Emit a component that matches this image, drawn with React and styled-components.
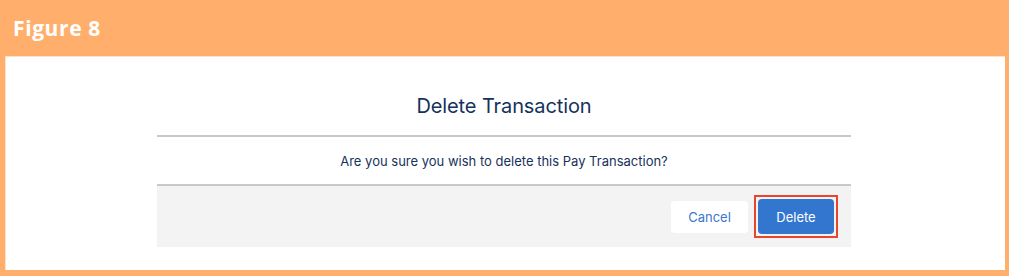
import React from 'react';
import styled, { createGlobalStyle } from 'styled-components';

const GlobalStyle = createGlobalStyle`
  html, body {
    margin: 0;
    padding: 0;
    background: #ffffff;
  }
  * {
    box-sizing: border-box;
  }
`;

function App() {
  return (
    <>
      <GlobalStyle />
      <Frame>
        <FigureHeader>Figure 8</FigureHeader>
        <Canvas>
          <Modal>
            <ModalHeader>
              <Title>Delete Transaction</Title>
            </ModalHeader>
            <ModalBody>
              Are you sure you wish to delete this Pay Transaction?
            </ModalBody>
            <ModalFooter>
              <Button>Cancel</Button>
              <Highlight>
                <Button $primary>Delete</Button>
              </Highlight>
            </ModalFooter>
          </Modal>
        </Canvas>
      </Frame>
    </>
  );
}

const Frame = styled.div`
  display: flex;
  flex-direction: column;
  width: 1009px;
  height: 276px;
  padding: 0 4px 6px 5px;
  background-color: #ffaf6b;
`;

const FigureHeader = styled.h1`
  margin: 0;
  height: 56px;
  padding: 12px 0 0 8px;
  font-family: 'Open Sans', 'Liberation Sans', sans-serif;
  font-size: 21px;
  font-weight: 700;
  letter-spacing: 0.6px;
  color: #ffffff;
  line-height: 32px;
`;

const Canvas = styled.div`
  flex: 1;
  display: flex;
  justify-content: center;
  align-items: flex-start;
  padding: 17px 3px 0 0;
  background-color: #ffffff;
  border-left: 1px solid #ffe2c6;
  border-top: 1px solid #ffe2c6;
`;

const Modal = styled.section`
  width: 694px;
  display: flex;
  flex-direction: column;
  font-family: Inter, 'Noto Sans', 'Liberation Sans', sans-serif;
  color: #16325c;
`;

const ModalHeader = styled.header`
  height: 63px;
  display: flex;
  align-items: center;
  justify-content: center;
  border-bottom: 2px solid #c9c9c9;
`;

const Title = styled.h2`
  margin: 0;
  padding-top: 2px;
  font-size: 20px;
  font-weight: 400;
  letter-spacing: -0.1px;
`;

const ModalBody = styled.p`
  margin: 0;
  height: 49px;
  display: flex;
  align-items: center;
  justify-content: center;
  font-size: 13px;
  border-bottom: 2px solid #c9c9c9;
`;

const ModalFooter = styled.footer`
  height: 61px;
  display: flex;
  align-items: center;
  justify-content: flex-end;
  gap: 6px;
  padding-right: 13px;
  background-color: #f3f3f3;
`;

const Highlight = styled.span`
  display: flex;
  padding: 2px;
  border: 2px solid #e8452f;
`;

const Button = styled.button`
  height: ${({ $primary }) => ($primary ? '35px' : '32px')};
  width: ${({ $primary }) => ($primary ? '76px' : '77px')};
  border: none;
  border-radius: 4px;
  font-family: Inter, 'Noto Sans', 'Liberation Sans', sans-serif;
  font-size: 13px;
  background-color: ${({ $primary }) => ($primary ? '#3276d0' : '#ffffff')};
  color: ${({ $primary }) => ($primary ? '#ffffff' : '#3a78cc')};
  cursor: pointer;
`;

export default App;
